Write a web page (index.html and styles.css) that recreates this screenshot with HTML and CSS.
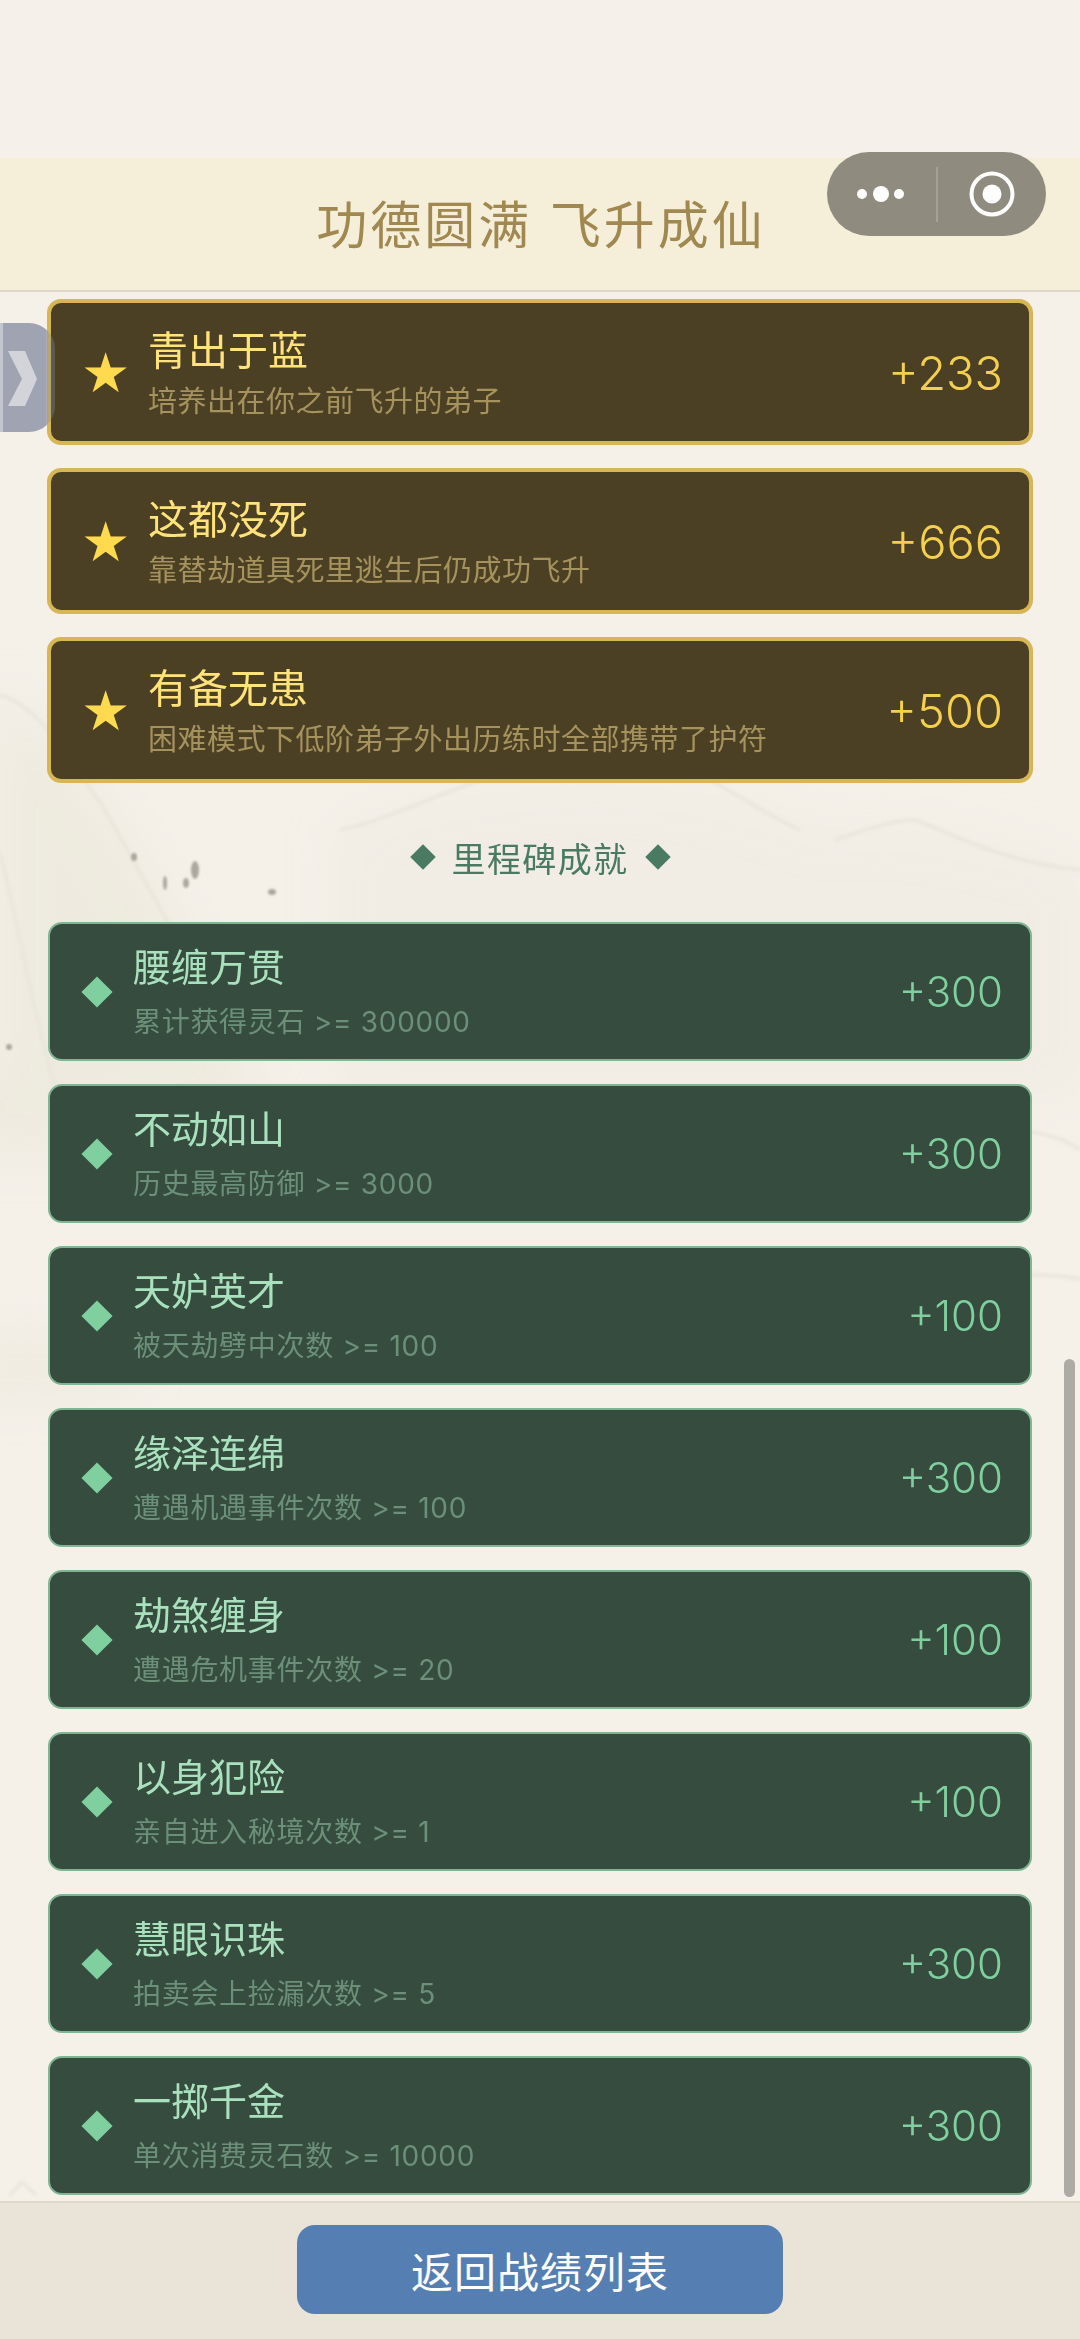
FILE: index.html
```html
<!DOCTYPE html>
<html lang="zh-CN">
<head>
    <meta charset="UTF-8">
    <meta name="viewport" content="width=device-width, initial-scale=1.0">
    <title>功德圆满 飞升成仙</title>
    <link rel="stylesheet" href="styles.css">
</head>
<body>
    <div class="page">
        <div class="status-space"></div>

        <header class="title-bar">
            <h1>功德圆满 飞升成仙</h1>
            <div class="capsule">
                <svg class="capsule-dots" width="48" height="20" viewBox="0 0 48 20">
                    <circle cx="5" cy="10" r="5" fill="#fff"/>
                    <circle cx="24" cy="10" r="8" fill="#fff"/>
                    <circle cx="42" cy="10" r="5" fill="#fff"/>
                </svg>
                <span class="capsule-line"></span>
                <svg class="capsule-target" width="48" height="48" viewBox="0 0 48 48">
                    <circle cx="24" cy="24" r="20.5" fill="none" stroke="#fff" stroke-width="4"/>
                    <circle cx="24" cy="24" r="9.5" fill="#fff"/>
                </svg>
            </div>
        </header>

        <main class="scroll-area">
            <!-- faint ink landscape behind the list -->
            <svg class="ink-wash" width="1080" height="1910" viewBox="0 0 1080 1910">
                <defs>
                    <filter id="wash" x="-20%" y="-20%" width="140%" height="140%"><feGaussianBlur stdDeviation="24"/></filter>
                    <filter id="line"><feGaussianBlur stdDeviation="1.5"/></filter>
                    <filter id="speck"><feGaussianBlur stdDeviation="1.2"/></filter>
                </defs>
                <g filter="url(#wash)" fill="#eeeadf">
                    <path d="M0 400 C100 490 200 660 260 820 L0 840 Z"/>
                    <path d="M340 540 C500 480 700 480 820 540 C900 530 1000 550 1080 580 L1080 800 L340 800 Z" opacity="0.5"/>
                    <ellipse cx="30" cy="820" rx="120" ry="40"/>
                    <ellipse cx="30" cy="1075" rx="110" ry="26"/>
                </g>
                <g filter="url(#line)" fill="none" stroke="#e9e5da" stroke-width="3">
                    <path d="M0 403 C40 413 70 470 100 510 C130 560 180 660 250 760"/>
                    <path d="M0 560 C20 640 40 760 70 840"/>
                    <path d="M340 538 C380 530 420 510 480 488 C560 478 650 480 710 488 C750 510 780 530 800 538"/>
                    <path d="M835 548 C860 540 890 528 915 528 C950 540 1000 570 1080 578"/>
                    <path d="M1030 840 C1050 842 1070 850 1080 858"/>
                    <path d="M1030 983 C1050 983 1070 985 1080 987"/>
                    <path d="M10 1903 L22 1890 L36 1903"/>
                </g>
                <g filter="url(#speck)" fill="#aaa79d">
                    <ellipse cx="134" cy="565" rx="3" ry="4"/>
                    <ellipse cx="195" cy="578" rx="4" ry="9"/>
                    <ellipse cx="186" cy="591" rx="3" ry="5"/>
                    <ellipse cx="165" cy="591" rx="2" ry="7"/>
                    <ellipse cx="272" cy="600" rx="4" ry="3"/>
                    <ellipse cx="9" cy="755" rx="3" ry="3"/>
                </g>
            </svg>

            <ul class="list">
                <li class="item gold">
                    <span class="star">★</span>
                    <div class="info">
                        <div class="name">青出于蓝</div>
                        <div class="desc">培养出在你之前飞升的弟子</div>
                    </div>
                    <div class="points">+233</div>
                </li>
                <li class="item gold">
                    <span class="star">★</span>
                    <div class="info">
                        <div class="name">这都没死</div>
                        <div class="desc">靠替劫道具死里逃生后仍成功飞升</div>
                    </div>
                    <div class="points">+666</div>
                </li>
                <li class="item gold">
                    <span class="star">★</span>
                    <div class="info">
                        <div class="name">有备无患</div>
                        <div class="desc">困难模式下低阶弟子外出历练时全部携带了护符</div>
                    </div>
                    <div class="points">+500</div>
                </li>
            </ul>

            <h2 class="section-title"><span class="small-diamond"></span>里程碑成就<span class="small-diamond"></span></h2>

            <ul class="list green-list">
                <li class="item green">
                    <span class="diamond"></span>
                    <div class="info">
                        <div class="name">腰缠万贯</div>
                        <div class="desc">累计获得灵石 &gt;= 300000</div>
                    </div>
                    <div class="points">+300</div>
                </li>
                <li class="item green">
                    <span class="diamond"></span>
                    <div class="info">
                        <div class="name">不动如山</div>
                        <div class="desc">历史最高防御 &gt;= 3000</div>
                    </div>
                    <div class="points">+300</div>
                </li>
                <li class="item green">
                    <span class="diamond"></span>
                    <div class="info">
                        <div class="name">天妒英才</div>
                        <div class="desc">被天劫劈中次数 &gt;= 100</div>
                    </div>
                    <div class="points">+100</div>
                </li>
                <li class="item green">
                    <span class="diamond"></span>
                    <div class="info">
                        <div class="name">缘泽连绵</div>
                        <div class="desc">遭遇机遇事件次数 &gt;= 100</div>
                    </div>
                    <div class="points">+300</div>
                </li>
                <li class="item green">
                    <span class="diamond"></span>
                    <div class="info">
                        <div class="name">劫煞缠身</div>
                        <div class="desc">遭遇危机事件次数 &gt;= 20</div>
                    </div>
                    <div class="points">+100</div>
                </li>
                <li class="item green">
                    <span class="diamond"></span>
                    <div class="info">
                        <div class="name">以身犯险</div>
                        <div class="desc">亲自进入秘境次数 &gt;= 1</div>
                    </div>
                    <div class="points">+100</div>
                </li>
                <li class="item green">
                    <span class="diamond"></span>
                    <div class="info">
                        <div class="name">慧眼识珠</div>
                        <div class="desc">拍卖会上捡漏次数 &gt;= 5</div>
                    </div>
                    <div class="points">+300</div>
                </li>
                <li class="item green">
                    <span class="diamond"></span>
                    <div class="info">
                        <div class="name">一掷千金</div>
                        <div class="desc">单次消费灵石数 &gt;= 10000</div>
                    </div>
                    <div class="points">+300</div>
                </li>
            </ul>

            <div class="side-handle">
                <svg width="30" height="55" viewBox="0 0 30 55">
                    <path d="M0 0 H17 L29 28 L17 55 H0 L14 28 Z" fill="#d2d4da"/>
                </svg>
            </div>
            <div class="scrollbar"></div>
        </main>

        <footer class="footer">
            <button class="btn">返回战绩列表</button>
        </footer>
    </div>
</body>
</html>
```

FILE: styles.css
```css
* {
    margin: 0;
    padding: 0;
    box-sizing: border-box;
}

body {
    background: #f5f0e8;
    font-family: "Inter", "Noto Sans CJK SC", sans-serif;
}

.page {
    width: 1080px;
    height: 2339px;
    display: flex;
    flex-direction: column;
    overflow: hidden;
}

.status-space {
    height: 158px;
    background: #f5f0e9;
}

.title-bar {
    height: 134px;
    background: #f5eed8;
    border-bottom: 2px solid #dcd8cb;
    display: flex;
    align-items: center;
    justify-content: center;
    position: relative;
}

.title-bar h1 {
    font-size: 51px;
    font-weight: 400;
    letter-spacing: 3px;
    color: #a08850;
    padding: 0 0 4px 2px;
}

.capsule {
    position: absolute;
    left: 827px;
    top: -6px;
    width: 219px;
    height: 84px;
    border-radius: 42px;
    background: #8f8b7e;
    display: flex;
    align-items: center;
    padding-left: 30px;
}

.capsule-line {
    width: 2px;
    height: 55px;
    background: #a5a295;
    margin-left: 31px;
}

.capsule-target {
    margin-left: 30px;
}

.scroll-area {
    flex: 1;
    position: relative;
    padding: 7px 47px 0 47px;
    overflow: hidden;
    background: #f5f0e8;
}

.ink-wash {
    position: absolute;
    left: 0;
    top: 0;
}

.list {
    list-style: none;
    display: flex;
    flex-direction: column;
    gap: 23px;
    position: relative;
}

.item {
    display: flex;
    align-items: center;
}

.gold {
    height: 146px;
    background: #4c4024;
    border: 4px solid #d6b655;
    border-radius: 14px;
    padding: 0 26px 0 30px;
}

.green {
    height: 139px;
    background: #354c3e;
    border: 2px solid #7fb593;
    border-radius: 14px;
    padding: 0 27px 0 30px;
}

.star {
    flex-shrink: 0;
    width: 46px;
    margin: 2px 21px 0 0;
    font-size: 55px;
    line-height: 1;
    color: #ffd94e;
    font-family: "DejaVu Sans", sans-serif;
    text-align: center;
}

.diamond {
    flex-shrink: 0;
    width: 22px;
    height: 22px;
    margin: 0 25px 0 6px;
    background: #7fd09e;
    transform: rotate(45deg);
}

.info {
    flex: 1;
    min-width: 0;
}

.name {
    line-height: 52px;
}

.desc {
    line-height: 38px;
}

.gold .name {
    font-size: 40px;
    color: #ffe27a;
    margin-top: 2px;
}

.gold .desc {
    font-size: 29px;
    letter-spacing: 0.5px;
    margin-top: 6px;
    color: #a5925d;
}

.green .name {
    font-size: 38px;
    color: #a9e0bd;
    margin-top: -2px;
}

.green .desc {
    font-size: 28px;
    letter-spacing: 0.7px;
    margin-top: 10px;
    color: #6b8f79;
}

.points {
    font-weight: 350;
}

.gold .points {
    font-size: 47px;
    color: #f5d04f;
}

.green .points {
    font-size: 42px;
    color: #7fd09e;
}

.section-title {
    height: 126px;
    margin-top: 13px;
    padding-bottom: 4px;
    font-size: 34px;
    font-weight: 400;
    letter-spacing: 1.4px;
    color: #4a7a62;
    display: flex;
    align-items: center;
    justify-content: center;
    position: relative;
}

.small-diamond {
    width: 18px;
    height: 18px;
    margin: 0 20px;
    background: #4a7a62;
    transform: rotate(45deg);
}

.green-list {
    margin: 0 1px;
}

.side-handle {
    position: absolute;
    left: 0;
    top: 31px;
    width: 55px;
    height: 109px;
    padding: 28px 0 0 8px;
    background: linear-gradient(to right, #c3c6cf 0, #c3c6cf 3px, rgba(130, 138, 160, 0.75) 3px, rgba(130, 138, 160, 0.75) 46px, rgba(130, 138, 160, 0.35) 48px);
    border-radius: 0 26px 26px 0;
}

.scrollbar {
    position: absolute;
    left: 1064px;
    top: 1067px;
    width: 11px;
    height: 838px;
    border-radius: 6px;
    background: #aeaba5;
}

.footer {
    height: 138px;
    background: #e9e3d8;
    border-top: 2px solid #dcd8cb;
    display: flex;
    justify-content: center;
    padding-top: 22px;
}

.btn {
    width: 486px;
    height: 89px;
    background: #557fb2;
    color: #fff;
    border: none;
    border-radius: 18px;
    font-family: inherit;
    font-size: 42px;
    letter-spacing: 1px;
}
```
